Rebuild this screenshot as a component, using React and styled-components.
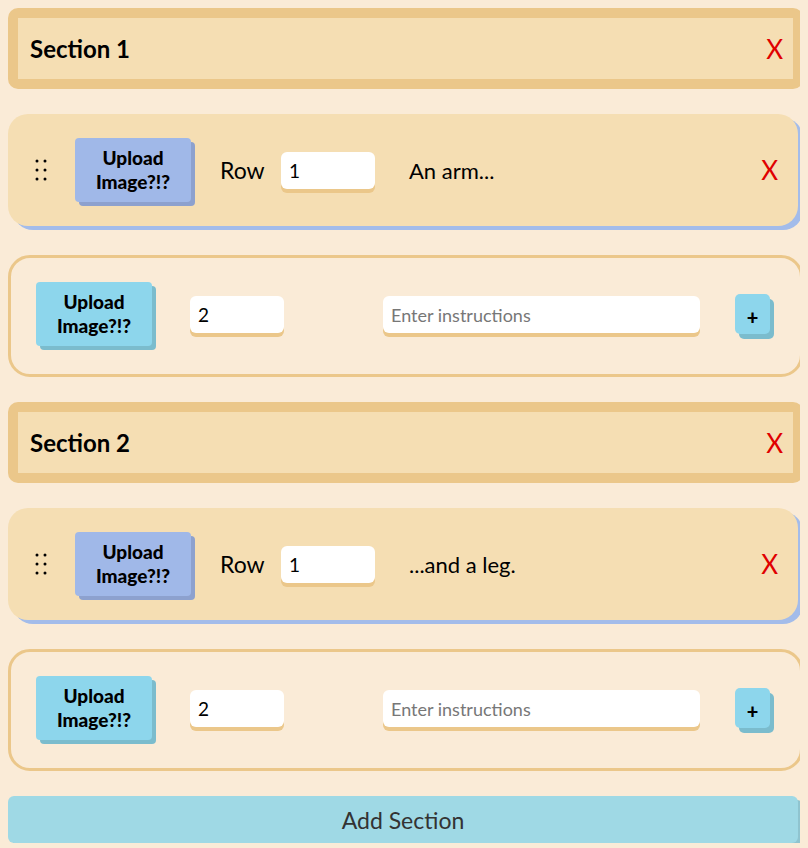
import React, { useState } from "react";
import styled, { createGlobalStyle } from "styled-components";

const GlobalStyle = createGlobalStyle`
  body {
    margin: 8px;
    background-color: #faebd7;
    font-family: "Lato", "Open Sans", sans-serif;
  }
`;

const Page = styled.div`
  width: 795px;
  display: flex;
  flex-direction: column;
  gap: 25px;
`;

const SectionHeader = styled.div`
  box-sizing: border-box;
  height: 81px;
  display: flex;
  align-items: center;
  justify-content: space-between;
  padding: 0 10px 0 12px;
  background-color: #f5deb3;
  border: 10px solid #ebc78a;
  border-radius: 10px;
`;

const SectionTitle = styled.h2`
  margin: 0;
  font-size: 24px;
  font-weight: 700;
  color: #000;
`;

const RemoveButton = styled.button`
  background: none;
  border: none;
  padding: 0;
  color: #e00000;
  font-family: "Lato", sans-serif;
  font-size: 26px;
  line-height: 1;
  cursor: pointer;
`;

const RowCard = styled.div`
  box-sizing: border-box;
  width: 790px;
  height: 112px;
  margin-bottom: 4px;
  display: flex;
  align-items: center;
  padding: 0 20px 0 27px;
  background-color: #f5deb3;
  border-radius: 20px;
  box-shadow: 5px 4px 0 #a3bcea;
`;

const Handle = styled.div`
  width: 12px;
  margin-right: 28px;
  display: flex;
  align-items: center;
`;

const UploadButton = styled.button`
  width: 116px;
  height: 64px;
  flex-shrink: 0;
  border: none;
  border-radius: 4px;
  background-color: ${(p) => (p.$light ? "#8dd6ec" : "#a0b8e8")};
  box-shadow: 4px 4px 0 ${(p) => (p.$light ? "#7bbccd" : "#8da1ce")};
  font-family: "Lato", sans-serif;
  font-weight: 900;
  font-size: 19px;
  line-height: 24px;
  color: #000;
  cursor: pointer;
`;

const RowLabel = styled.span`
  width: 61px;
  margin-left: 29px;
  font-size: 23px;
  color: #000;
`;

const Field = styled.input`
  box-sizing: border-box;
  width: ${(p) => p.$width}px;
  height: 37px;
  padding: 0 8px;
  border: none;
  border-radius: 6px;
  background: #fff;
  box-shadow: 0 4px 0 #ebc78a;
  font-family: "Lato", sans-serif;
  font-size: 19px;
  color: #000;
  outline: none;

  &::placeholder {
    color: #777;
    font-size: 18px;
  }
`;

const RowText = styled.span`
  flex: 1;
  margin-left: 34px;
  font-size: 22px;
  color: #000;
`;

const InputCard = styled.div`
  box-sizing: border-box;
  height: 122px;
  display: flex;
  align-items: center;
  padding: 0 0 4px 25px;
  border: 3px solid #ebc78a;
  border-radius: 22px;
`;

const Spacer = styled.div`
  width: ${(p) => p.$w}px;
  flex-shrink: 0;
`;

const PlusButton = styled.button`
  width: 35px;
  height: 40px;
  border: none;
  border-radius: 5px;
  background-color: #8dd6ec;
  box-shadow: 4px 5px 0 #7bbccd;
  font-family: "Lato", sans-serif;
  font-size: 20px;
  font-weight: 900;
  color: #000;
  padding: 6px 0 0;
  cursor: pointer;
`;

const AddSectionButton = styled.button`
  width: 790px;
  height: 47px;
  border: none;
  border-radius: 6px;
  background-color: #9fd9e5;
  box-shadow: 5px 4px 0 #8fc4cf;
  font-family: "Lato", sans-serif;
  font-size: 23px;
  color: #333;
  cursor: pointer;
`;

const DragDots = () => (
  <svg width="12" height="22" viewBox="0 0 12 22">
    {[2, 11, 20].map((y) =>
      [2, 10].map((x) => <circle key={`${x}-${y}`} cx={x} cy={y} r="1.5" fill="#000" />)
    )}
  </svg>
);

const Section = ({ section }) => (
  <>
    <SectionHeader>
      <SectionTitle>{section.title}</SectionTitle>
      <RemoveButton>X</RemoveButton>
    </SectionHeader>
    {section.rows.map((row) => (
      <RowCard key={row.num}>
        <Handle>
          <DragDots />
        </Handle>
        <UploadButton>
          Upload
          <br />
          Image?!?
        </UploadButton>
        <RowLabel>Row</RowLabel>
        <Field $width={94} defaultValue={row.num} />
        <RowText>{row.text}</RowText>
        <RemoveButton>X</RemoveButton>
      </RowCard>
    ))}
    <InputCard>
      <UploadButton $light>
        Upload
        <br />
        Image?!?
      </UploadButton>
      <Spacer $w={38} />
      <Field $width={94} defaultValue={section.rows.length + 1} />
      <Spacer $w={99} />
      <Field $width={317} placeholder="Enter instructions" />
      <Spacer $w={35} />
      <PlusButton>+</PlusButton>
    </InputCard>
  </>
);

export default function App() {
  const [sections] = useState([
    { title: "Section 1", rows: [{ num: 1, text: "An arm..." }] },
    { title: "Section 2", rows: [{ num: 1, text: "...and a leg." }] },
  ]);

  return (
    <Page>
      <GlobalStyle />
      {sections.map((s) => (
        <Section key={s.title} section={s} />
      ))}
      <AddSectionButton>Add Section</AddSectionButton>
    </Page>
  );
}
